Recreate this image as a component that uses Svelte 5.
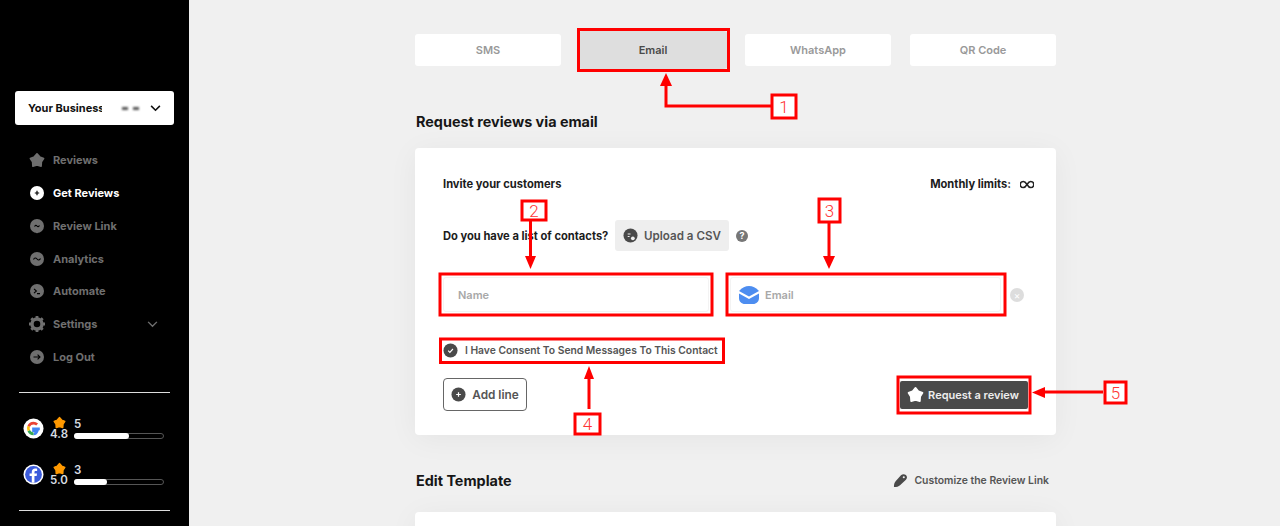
<script>
	const tabs = ['SMS', 'Email', 'WhatsApp', 'QR Code'];
	const nav = [
		{ label: 'Reviews', icon: 'star' },
		{ label: 'Get Reviews', icon: 'plus', active: true },
		{ label: 'Review Link', icon: 'link' },
		{ label: 'Analytics', icon: 'wave' },
		{ label: 'Automate', icon: 'term' },
		{ label: 'Settings', icon: 'gear', chevron: true },
		{ label: 'Log Out', icon: 'arrow' }
	];
	const boxes = [
		[578.5, 29.5, 150, 41],
		[440, 274, 272, 41],
		[727, 274, 278, 41],
		[440.5, 339, 283, 23.5],
		[898, 377, 132, 36]
	];
	const labels = [
		{ n: 1, x: 772, y: 95, w: 24, h: 23 },
		{ n: 2, x: 522, y: 201, w: 24, h: 19 },
		{ n: 3, x: 819, y: 199, w: 21, h: 23 },
		{ n: 4, x: 575, y: 414, w: 25, h: 20 },
		{ n: 5, x: 1105, y: 382, w: 21, h: 21 }
	];
	const arrows = [
		'M772 106 H666 V84',
		'M530.5 221 V256',
		'M829 222 V256',
		'M589 409 V378',
		'M1103 392 H1044'
	];
	const heads = ['660,86 672,86 666,73', '525,256 536,256 530.5,269', '823,256 835,256 829,269', '584,379 594,379 589,366', '1045,387 1045,398 1032,392.5'];
	const starPath = 'M8 1.8 L10.7 4.9 L14.6 6.5 L12.4 9.9 L12.1 14.2 L8 13.1 L3.9 14.2 L3.6 9.9 L1.4 6.5 L5.3 4.9 Z';
</script>

{#snippet icon(name)}
	<svg class="nav-icon" viewBox="0 0 16 16" width="16" height="16">
		{#if name === 'star'}
			<path d={starPath} fill="currentColor" stroke="currentColor" stroke-width="1.6" stroke-linejoin="round" />
		{:else if name === 'gear'}
			<circle cx="8" cy="8" r="5" fill="none" stroke="currentColor" stroke-width="3.4" />
			<path d="M8 0 V3 M8 13 V16 M0 8 H3 M13 8 H16 M2.3 2.3 L4.5 4.5 M11.5 11.5 L13.7 13.7 M13.7 2.3 L11.5 4.5 M4.5 11.5 L2.3 13.7" stroke="currentColor" stroke-width="2.8" />
		{:else}
			<circle cx="8" cy="8" r="7" fill="currentColor" />
			{#if name === 'plus'}
				<path d="M8 5.8 V10.2 M5.8 8 H10.2" stroke="#000" stroke-width="1.2" />
			{:else if name === 'link'}
				<path d="M5.5 8.5 Q6.8 6.5 8 8 T10.5 7.5" stroke="#000" stroke-width="1.1" fill="none" />
				<path d="M5 12 L8 15.5 L11 12 Z" fill="currentColor" />
			{:else if name === 'wave'}
				<path d="M4.5 8.5 Q6 5.8 8 8 T11.5 7.5" stroke="#000" stroke-width="1.1" fill="none" />
			{:else if name === 'term'}
				<path d="M5 5.8 L7.4 8 L5 10.2 M8 10.6 H11" stroke="#000" stroke-width="1.1" fill="none" />
			{:else if name === 'arrow'}
				<path d="M4.5 8 H11 M8.6 5.6 L11 8 L8.6 10.4" stroke="#000" stroke-width="1.1" fill="none" />
			{/if}
		{/if}
	</svg>
{/snippet}

{#snippet star(size, color)}
	<svg viewBox="0 0 16 16" width={size} height={size}>
		<path d={starPath} fill={color} stroke={color} stroke-width="1.6" stroke-linejoin="round" />
	</svg>
{/snippet}

<div class="page">
	<aside class="sidebar">
		<button class="business">
			<span class="business-name">Your Business</span>
			<span class="redacted"><span class="smudge"><i></i><i></i></span></span>
			<svg viewBox="0 0 12 8" width="11" height="7"><path d="M1 1 L6 6 L11 1" fill="none" stroke="#111" stroke-width="1.8" /></svg>
		</button>

		<nav>
			{#each nav as item}
				<div class="nav-item" class:active={item.active}>
					{@render icon(item.icon)}
					<span>{item.label}</span>
					{#if item.chevron}
						<svg class="chev" viewBox="0 0 12 8" width="11" height="7"><path d="M1 1 L6 6 L11 1" fill="none" stroke="currentColor" stroke-width="1.6" /></svg>
					{/if}
				</div>
			{/each}
		</nav>

		<div class="ratings">
			<div class="rating">
				<svg class="logo" viewBox="0 0 22 22" width="21" height="21">
					<circle cx="11" cy="11" r="10.5" fill="#fff" />
					<path d="M17.6 11.4 H11 V13.2 H15 C14.4 15.2 12.9 16.6 11 16.6" fill="none" stroke="#4285f4" stroke-width="2.8" />
					<path d="M11 16.6 C8.8 16.6 6.9 15.2 6 13.2" fill="none" stroke="#34a853" stroke-width="2.8" />
					<path d="M6 13.2 C5.4 11.7 5.4 10.1 6 8.6" fill="none" stroke="#fbbc05" stroke-width="2.8" />
					<path d="M6 8.6 C6.9 6.6 8.8 5.3 11 5.3 C12.5 5.3 13.8 5.9 14.8 6.8" fill="none" stroke="#ea4335" stroke-width="2.8" />
				</svg>
				<div class="score">
					{@render star(13, '#f90')}
					<span>4.8</span>
				</div>
				<div class="count">
					<span>5</span>
					<div class="bar"><div class="fill" style="width: 62%"></div></div>
				</div>
			</div>
			<div class="rating">
				<svg class="logo" viewBox="0 0 22 22" width="21" height="21">
					<circle cx="11" cy="11" r="10.5" fill="#fff" />
					<circle cx="11" cy="11" r="8.8" fill="#3b5bdb" />
					<path d="M12 19.6 V12.6 H14.3 L14.7 10 H12 V8.6 C12 7.8 12.4 7.3 13.3 7.3 H14.8 V5 C14.2 4.9 13.5 4.8 12.8 4.8 C10.6 4.8 9.2 6.1 9.2 8.3 V10 H6.9 V12.6 H9.2 V19.6 Z" fill="#fff" />
				</svg>
				<div class="score">
					{@render star(13, '#f90')}
					<span>5.0</span>
				</div>
				<div class="count">
					<span>3</span>
					<div class="bar"><div class="fill" style="width: 38%"></div></div>
				</div>
			</div>
		</div>
	</aside>

	<main>
		<div class="tabs">
			{#each tabs as tab}
				<div class="tab" class:selected={tab === 'Email'}>{tab}</div>
			{/each}
		</div>

		<h2 class="request-title">Request reviews via email</h2>

		<section class="card">
			<div class="card-top">
				<span class="strong">Invite your customers</span>
				<span class="limits">
					<span class="strong">Monthly limits:</span>
					<svg viewBox="0 0 16 9" width="14" height="9"><path d="M8 4.5 C6.5 2 5.5 1 3.8 1 A3.5 3.5 0 0 0 3.8 8 C5.5 8 6.5 7 8 4.5 C9.5 2 10.5 1 12.2 1 A3.5 3.5 0 0 1 12.2 8 C10.5 8 9.5 7 8 4.5 Z" fill="none" stroke="#222" stroke-width="1.7" /></svg>
				</span>
			</div>

			<div class="contacts">
				<span class="strong contacts-label">Do you have a list of contacts?</span>
				<button class="upload">
					<svg viewBox="0 0 16 16" width="15" height="15">
						<circle cx="8" cy="8" r="7.5" fill="#4a4a4a" />
						<path d="M5 6.5 H8 M5 9 H7" stroke="#eee" stroke-width="1.1" />
						<circle cx="10.5" cy="11" r="2" fill="#eee" />
					</svg>
					Upload a CSV
				</button>
				<span class="help">?</span>
			</div>

			<div class="fields">
				<div class="field name">Name</div>
				<div class="field email">
					<svg viewBox="0 0 20 18" width="20" height="18">
						<path d="M0 5 C3 1.5 6.5 0 10 0 C13.5 0 17 1.5 20 5 L10 10.5 Z" fill="#4d8df0" />
						<path d="M0 7.5 L10 13 L20 7.5 V12 C20 15.5 17.5 18 14 18 H6 C2.5 18 0 15.5 0 12 Z" fill="#4d8df0" />
					</svg>
					Email
				</div>
				<span class="clear">×</span>
			</div>

			<div class="consent">
				<svg viewBox="0 0 16 16" width="15" height="15">
					<circle cx="8" cy="8" r="7.5" fill="#4a4a4a" />
					<path d="M5.5 8.2 L7.3 10 L10.6 6.4" fill="none" stroke="#fff" stroke-width="1.2" />
				</svg>
				<span>I Have Consent To Send Messages To This Contact</span>
			</div>

			<div class="actions">
				<button class="add-line">
					<svg viewBox="0 0 16 16" width="15" height="15">
						<circle cx="8" cy="8" r="7.5" fill="#4a4a4a" />
						<path d="M8 5.5 V10.5 M5.5 8 H10.5" stroke="#fff" stroke-width="1.3" />
					</svg>
					Add line
				</button>
				<button class="request">
					{@render star(17, '#fff')}
					Request a review
				</button>
			</div>
		</section>

		<div class="template-head">
			<h2>Edit Template</h2>
			<span class="customize">
				<svg viewBox="0 0 16 16" width="15" height="15"><path d="M1 15 C1 12 1.5 10 3 8.5 L8.5 2.5 C10 1 12 0.8 13.8 2.2 C15.4 3.8 15.2 5.8 13.8 7.2 L7.5 13 C6 14.4 4 15 1 15 Z" fill="#4a4a4a" /><circle cx="11.5" cy="4.5" r="1.1" fill="#f0f0f0" /></svg>
				Customize the Review Link
			</span>
		</div>

		<section class="card lower"></section>
	</main>

	<svg class="annotations" viewBox="0 0 1280 526" width="1280" height="526">
		<g fill="none" stroke="#f00" stroke-width="3">
			{#each boxes as b}
				<rect x={b[0]} y={b[1]} width={b[2]} height={b[3]} />
			{/each}
			{#each arrows as d}
				<path {d} />
			{/each}
			{#each labels as l}
				<rect x={l.x} y={l.y} width={l.w} height={l.h} fill="#fff" />
			{/each}
		</g>
		{#each heads as points}
			<polygon {points} fill="#f00" />
		{/each}
		{#each labels as l}
			<text x={l.x + l.w / 2} y={l.y + l.h / 2 + 6} text-anchor="middle" fill="#f33" font-size="17" font-weight="300" font-family="Roboto, sans-serif">{l.n}</text>
		{/each}
	</svg>
</div>

<style>
	:global(body) {
		margin: 0;
	}

	.page {
		position: relative;
		display: flex;
		width: 1280px;
		height: 526px;
		overflow: hidden;
		background: #f0f0f0;
		font-family: 'Inter', 'Liberation Sans', sans-serif;
		color: #1a1a1a;
	}

	button {
		font-family: inherit;
		border: none;
		padding: 0;
		cursor: pointer;
	}

	.sidebar {
		flex: 0 0 189px;
		height: 526px;
		box-sizing: border-box;
		background: #000;
		padding: 91px 15px 0;
		display: flex;
		flex-direction: column;
	}

	.business {
		width: 159px;
		height: 34px;
		flex: none;
		background: #fff;
		border-radius: 3px;
		display: flex;
		align-items: center;
		padding: 0 13px 0 13px;
		color: #111;
		font-size: 11px;
		font-weight: 700;
	}

	.business-name {
		flex: none;
		white-space: nowrap;
		text-align: left;
	}

	/* white patch over the end of the name, as in the reference */
	.redacted {
		position: absolute;
		left: 102px;
		top: 94px;
		width: 38px;
		height: 28px;
		background: #fff;
		display: flex;
		align-items: center;
		justify-content: flex-end;
		padding-right: 1px;
		box-sizing: border-box;
	}

	.smudge {
		display: flex;
		gap: 5px;
		filter: blur(1px);
	}

	.smudge i {
		width: 6px;
		height: 3px;
		background: #555;
	}

	.business svg {
		margin-left: auto;
	}

	nav {
		margin-top: 18.8px;
		display: flex;
		flex-direction: column;
		padding-left: 14px;
	}

	.nav-item {
		height: 32.8px;
		display: flex;
		align-items: center;
		gap: 8px;
		color: #6f6f6f;
		font-size: 11px;
		font-weight: 700;
	}

	.nav-item.active {
		color: #fff;
	}

	.nav-icon {
		flex: none;
	}

	.chev {
		margin-left: auto;
		margin-right: 16px;
	}

	.ratings {
		margin: 18.7px 4px 0;
		width: 151px;
		height: 119px;
		box-sizing: border-box;
		border-top: 1px solid #ddd;
		border-bottom: 1px solid #ddd;
		padding-top: 24px;
		display: flex;
		flex-direction: column;
		gap: 24px;
	}

	.rating {
		display: flex;
		align-items: center;
		height: 22px;
		color: #d8dde2;
		font-size: 11.5px;
		font-weight: 600;
	}

	.logo {
		flex: none;
		margin: 0 3px 0 4px;
	}

	.score {
		width: 24px;
		flex: none;
		display: flex;
		flex-direction: column;
		align-items: center;
		line-height: 11px;
	}

	.count {
		flex: 1;
		display: flex;
		flex-direction: column;
		gap: 2px;
		line-height: 13px;
		margin: 0 6px 0 3px;
	}

	.bar {
		height: 6px;
		box-sizing: border-box;
		border: 1px solid #555;
		border-radius: 3px;
		position: relative;
	}

	.fill {
		position: absolute;
		left: -1px;
		top: -1px;
		height: 6px;
		background: #fff;
		border-radius: 3px;
	}

	main {
		flex: none;
		width: 641px;
		margin-left: 226px;
		padding-top: 34px;
	}

	.tabs {
		display: grid;
		grid-template-columns: repeat(4, 146px);
		justify-content: space-between;
	}

	.tab {
		height: 32px;
		display: flex;
		align-items: center;
		justify-content: center;
		background: #fff;
		border-radius: 3px;
		color: #999;
		font-size: 11px;
		font-weight: 600;
	}

	.tab.selected {
		background: #dedede;
		box-shadow: 0 0 0 3px #dedede;
		color: #4a4a4a;
	}

	h2 {
		margin: 0 0 0 1px;
		font-size: 14.4px;
		font-weight: 700;
		color: #161616;
	}

	.request-title {
		margin-top: 47px;
		line-height: 18px;
	}

	.card {
		margin-top: 17px;
		height: 287px;
		box-sizing: border-box;
		background: #fff;
		border-radius: 4px;
		box-shadow: 0 4px 30px rgba(0, 0, 0, 0.05);
		padding: 28px 22px 0 28px;
	}

	.strong {
		font-size: 11.15px;
		font-weight: 700;
		color: #1c1c1c;
	}

	.card-top {
		display: flex;
		justify-content: space-between;
		align-items: center;
		height: 16px;
	}

	.limits {
		display: flex;
		align-items: center;
		gap: 9px;
	}

	.contacts {
		margin-top: 28px;
		display: flex;
		align-items: center;
		gap: 6px;
	}

	.contacts-label {
		width: 166px;
		white-space: nowrap;
	}

	.upload {
		width: 114px;
		height: 31px;
		background: #eee;
		border-radius: 3px;
		display: flex;
		align-items: center;
		justify-content: center;
		gap: 6px;
		color: #555;
		font-size: 11.6px;
		font-weight: 600;
	}

	.help {
		width: 12px;
		height: 12px;
		margin-left: 1px;
		border-radius: 50%;
		background: #777;
		color: #fff;
		font-size: 9px;
		font-weight: 700;
		display: flex;
		align-items: center;
		justify-content: center;
	}

	.fields {
		margin-top: 26px;
		display: flex;
		align-items: center;
	}

	.field {
		height: 35px;
		box-sizing: border-box;
		border: 1px solid #f3f3f3;
		border-radius: 3px;
		display: flex;
		align-items: center;
		color: #a8a8a8;
		font-size: 11px;
		font-weight: 600;
	}

	.name {
		width: 266px;
		padding-left: 14px;
	}

	.email {
		width: 271px;
		margin-left: 21px;
		padding-left: 8px;
		gap: 6px;
	}

	.clear {
		width: 14px;
		height: 14px;
		margin-left: 9px;
		border-radius: 50%;
		background: #ddd;
		color: #fff;
		font-size: 10px;
		display: flex;
		align-items: center;
		justify-content: center;
	}

	.consent {
		margin-top: 30px;
		display: flex;
		align-items: center;
		gap: 7px;
		height: 16px;
		color: #555;
		font-size: 10.3px;
		font-weight: 600;
		white-space: nowrap;
	}

	.actions {
		margin-top: 20px;
		display: flex;
		justify-content: space-between;
		align-items: center;
	}

	.add-line {
		width: 84px;
		height: 33px;
		box-sizing: border-box;
		background: #fff;
		border: 1px solid #666;
		border-radius: 4px;
		display: flex;
		align-items: center;
		justify-content: center;
		gap: 6px;
		color: #555;
		font-size: 11.8px;
		font-weight: 600;
	}

	.request {
		width: 128px;
		height: 28px;
		margin-right: 6px;
		background: #4a4a4a;
		border-radius: 2px;
		display: flex;
		align-items: center;
		justify-content: center;
		gap: 4px;
		padding-right: 2px;
		color: #eee;
		font-size: 11px;
		font-weight: 600;
	}

	.template-head {
		margin-top: 35px;
		height: 20px;
		display: flex;
		justify-content: space-between;
		align-items: center;
	}

	.customize {
		display: flex;
		align-items: center;
		gap: 6px;
		margin-right: 7px;
		color: #555;
		font-size: 10.4px;
		font-weight: 600;
	}

	.lower {
		margin-top: 22px;
	}

	.annotations {
		position: absolute;
		left: 0;
		top: 0;
		pointer-events: none;
	}
</style>
